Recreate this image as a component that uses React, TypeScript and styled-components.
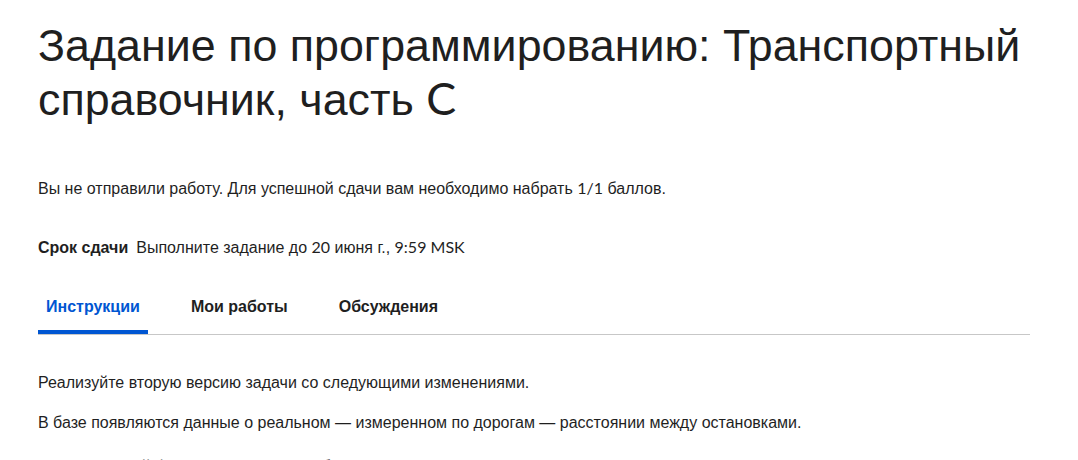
import React, { useState } from "react";
import styled, { createGlobalStyle } from "styled-components";

const GlobalStyle = createGlobalStyle`
  html, body {
    margin: 0;
    padding: 0;
    background: #ffffff;
  }
  body {
    font-family: "Liberation Sans", Arial, sans-serif;
    color: #1f1f1f;
    -webkit-font-smoothing: antialiased;
  }
`;

const Page = styled.main`
  padding: 18px 48px 0 38px;
  max-width: 992px;
  height: 460px;
  overflow: hidden;
`;

const Title = styled.h1`
  margin: 0;
  font-family: "Liberation Sans", Arial, sans-serif;
  font-weight: 400;
  font-size: 44.8px;
  line-height: 54px;
  color: #1f1f1f;
`;

const Latin = styled.span`
  font-family: "Lato", "Liberation Sans", sans-serif;
  line-height: 1;
`;

const Status = styled.p`
  margin: 51px 0 0;
  font-size: 16px;
  line-height: 24px;
`;

const Deadline = styled.div`
  margin-top: 35px;
  display: flex;
  align-items: baseline;
  gap: 8px;
  font-size: 16px;
  line-height: 24px;
`;

const DeadlineLabel = styled.strong`
  font-weight: 700;
`;

const TabList = styled.div`
  margin-top: 23px;
  display: flex;
  gap: 35px;
  border-bottom: 1px solid #c7c7c7;
`;

const Tab = styled.button<{ $active?: boolean }>`
  appearance: none;
  background: none;
  border: none;
  border-bottom: 4px solid ${(p) => (p.$active ? "#0056d2" : "transparent")};
  padding: 12px 8px 11px;
  margin: 0;
  font-family: "Liberation Sans", Arial, sans-serif;
  font-weight: 700;
  font-size: 16px;
  line-height: 24px;
  color: ${(p) => (p.$active ? "#0056d2" : "#1f1f1f")};
  cursor: pointer;
`;

const Content = styled.section`
  margin-top: 36px;
`;

const Paragraph = styled.p<{ $spaced?: boolean }>`
  margin: ${(p) => (p.$spaced ? "20px" : "0")} 0 16px;
  font-size: 16px;
  line-height: 24px;
`;

const tabs = ["Инструкции", "Мои работы", "Обсуждения"];

export default function App() {
  const [active, setActive] = useState(0);
  return (
    <>
      <GlobalStyle />
      <Page>
        <Title>
          Задание по программированию: Транспортный справочник, часть <Latin>C</Latin>
        </Title>
        <Status>
          Вы не отправили работу. Для успешной сдачи вам необходимо набрать <Latin>1/1</Latin> баллов.
        </Status>
        <Deadline>
          <DeadlineLabel>Срок сдачи</DeadlineLabel>
          <span>
            Выполните задание до <Latin>20</Latin> июня г., <Latin>9:59 MSK</Latin>
          </span>
        </Deadline>
        <TabList role="tablist">
          {tabs.map((t, i) => (
            <Tab key={t} role="tab" $active={i === active} onClick={() => setActive(i)}>
              {t}
            </Tab>
          ))}
        </TabList>
        <Content>
          <Paragraph>Реализуйте вторую версию задачи со следующими изменениями.</Paragraph>
          <Paragraph>
            В базе появляются данные о реальном — измеренном по дорогам — расстоянии между остановками.
          </Paragraph>
          <Paragraph $spaced>
            <strong>Stop X:</strong> (новый формат запроса на добавление остановки)
          </Paragraph>
        </Content>
      </Page>
    </>
  );
}
